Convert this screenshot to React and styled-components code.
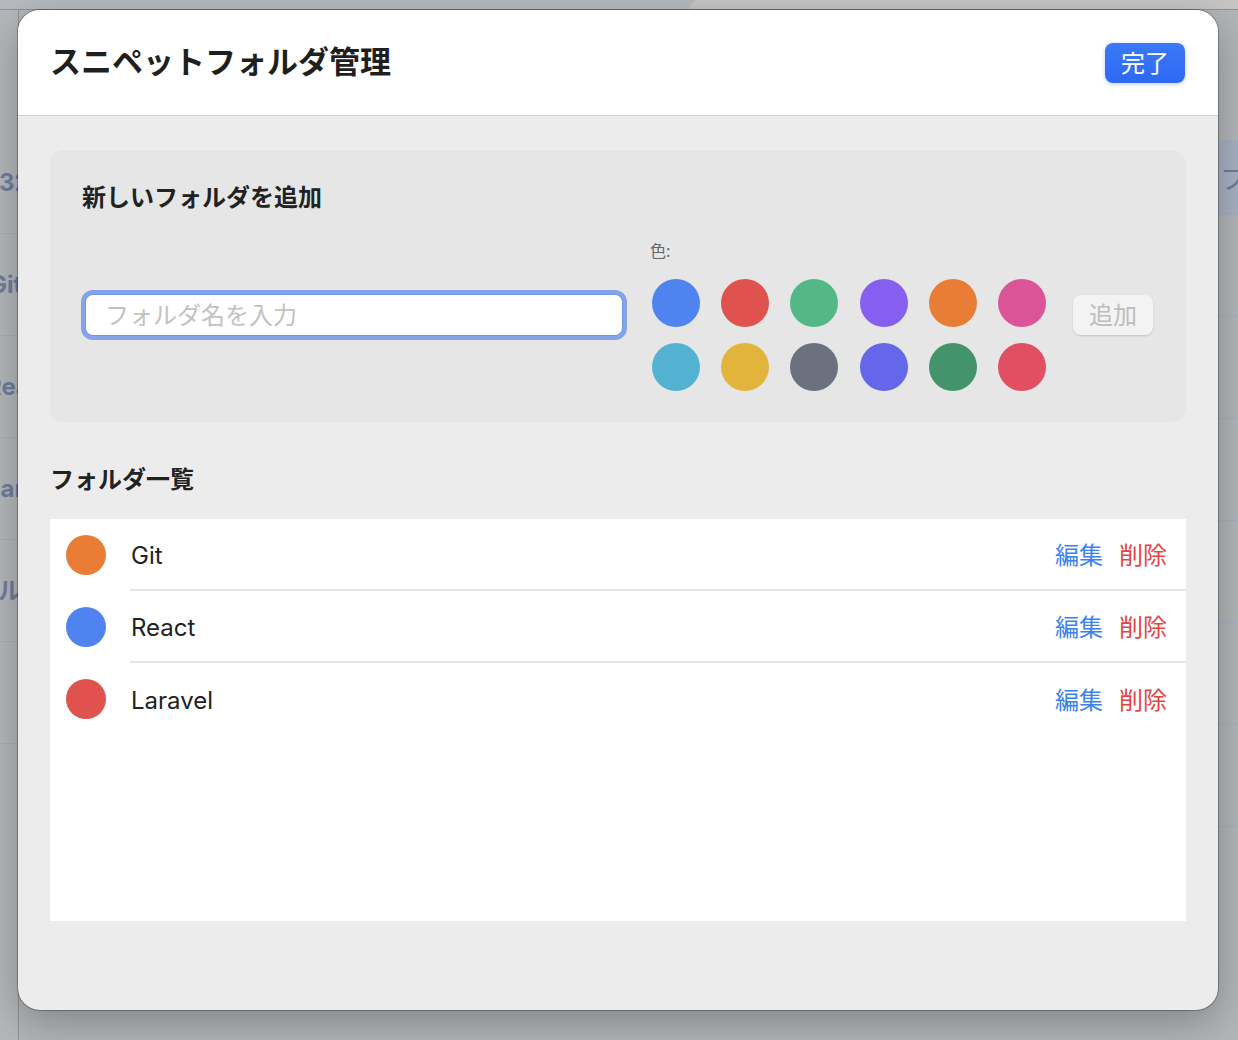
import React from "react";
import styled, { createGlobalStyle } from "styled-components";

const GlobalStyle = createGlobalStyle`
    html, body {
        margin: 0;
        padding: 0;
        width: 1238px;
        height: 1040px;
        overflow: hidden;
        font-family: "Noto Sans CJK JP", "Noto Sans", sans-serif;
    }
`;

const swatches = [
    "#4f83ef", "#df524e", "#54b886", "#875ff0", "#e97d36", "#dc5498",
    "#53b2d2", "#e2b43c", "#6c717f", "#6467e9", "#43946a", "#e14f62",
];

const folders = [
    { name: "Git", color: "#e97d36" },
    { name: "React", color: "#4f83ef" },
    { name: "Laravel", color: "#df524e" },
];

// what peeks out of the dimmed app behind the sheet
const sideItems = [
    { text: "32", shift: -1 },
    { text: "Git", shift: -11 },
    { text: "React", shift: -14 },
    { text: "Laravel", shift: -13 },
    { text: "ル", shift: -2 },
    { text: "", shift: 0 },
];
const mainItems = ["フォルダ", "", "", "", "", "", ""];

const App = () => {
    return (
        <>
            <GlobalStyle />
            <Backdrop>
                <TopStrip>
                    <TopLeft />
                    <TopTab />
                </TopStrip>
                <BackBody>
                    <SidePane>
                        {sideItems.map((s, i) => (
                            <SideRow key={i} $shift={s.shift}>{s.text}</SideRow>
                        ))}
                    </SidePane>
                    <MainPane />
                    <RightPane>
                        {mainItems.map((t, i) => (
                            <RightRow key={i} $active={i === 0}>{t}</RightRow>
                        ))}
                    </RightPane>
                </BackBody>
            </Backdrop>

            <Sheet>
                <Header>
                    <Title>スニペットフォルダ管理</Title>
                    <DoneButton>完了</DoneButton>
                </Header>

                <Body>
                    <AddCard>
                        <CardTitle>新しいフォルダを追加</CardTitle>
                        <AddRow>
                            <NameInput placeholder="フォルダ名を入力" />
                            <ColorColumn>
                                <ColorLabel>色:</ColorLabel>
                                <ColorGrid>
                                    {swatches.map((c) => (
                                        <Swatch key={c} $color={c} />
                                    ))}
                                </ColorGrid>
                            </ColorColumn>
                            <AddButton>追加</AddButton>
                        </AddRow>
                    </AddCard>

                    <SectionTitle>フォルダ一覧</SectionTitle>

                    <FolderList>
                        {folders.map((f) => (
                            <FolderRow key={f.name}>
                                <Dot $color={f.color} />
                                <RowMain>
                                    <FolderName>{f.name}</FolderName>
                                    <Action $tone="blue">編集</Action>
                                    <Action $tone="red">削除</Action>
                                </RowMain>
                            </FolderRow>
                        ))}
                    </FolderList>
                </Body>
            </Sheet>
        </>
    );
};

// background app (dimmed)
const Backdrop = styled.div`
    width: 1238px;
    height: 1040px;
    background: #b3b6b9;
    display: flex;
    flex-direction: column;
`;

const TopStrip = styled.div`
    height: 9px;
    display: flex;
    border-bottom: 1px solid #8f9295;
`;

const TopLeft = styled.div`
    width: 690px;
    background: #b7bbbf;
`;

const TopTab = styled.div`
    flex: 1;
    background: #c6c6c6;
    border-top-left-radius: 8px;
`;

const BackBody = styled.div`
    flex: 1;
    display: flex;
`;

const SidePane = styled.div`
    width: 18px;
    padding-top: 122px;
    background: #b5b8bb;
    border-right: 1px solid #909396;
    overflow: hidden;
`;

const SideRow = styled.div`
    height: 102px;
    line-height: 102px;
    box-sizing: border-box;
    white-space: nowrap;
    overflow: hidden;
    text-indent: ${(p) => p.$shift}px;
    font-family: "Inter", "Noto Sans CJK JP", sans-serif;
    font-weight: 700;
    font-size: 24px;
    color: #6f7ea0;
    border-bottom: 1px solid #a7b0bf;
`;

const MainPane = styled.div`
    flex: 1;
`;

const RightPane = styled.div`
    width: 20px;
    padding-top: 130px;
    overflow: hidden;
`;

const RightRow = styled.div`
    height: ${(p) => (p.$active ? "75px" : "102px")};
    box-sizing: border-box;
    padding-left: 2px;
    display: flex;
    align-items: center;
    white-space: nowrap;
    font-size: 26px;
    color: #6f7ea0;
    background: ${(p) => (p.$active ? "#a9b2c2" : "transparent")};
    border-bottom: 1px solid #a7b0bf;
`;

// sheet
const Sheet = styled.div`
    position: absolute;
    left: 18px;
    top: 10px;
    width: 1200px;
    height: 1000px;
    box-sizing: border-box;
    border-radius: 22px;
    overflow: hidden;
    background: #ececec;
    display: flex;
    flex-direction: column;
    box-shadow: 0 0 0 1px rgba(0, 0, 0, 0.28), 0 12px 40px rgba(0, 0, 0, 0.28);
`;

const Header = styled.div`
    height: 105px;
    flex-shrink: 0;
    background: #ffffff;
    border-bottom: 1px solid #d2d2d2;
    display: flex;
    align-items: center;
    justify-content: space-between;
    padding: 0 33px 0 32px;
`;

const Title = styled.h1`
    margin: 0;
    padding-bottom: 6px;
    font-size: 31px;
    font-weight: 600;
    color: #1f1f1f;
    letter-spacing: 0;
`;

const DoneButton = styled.button`
    height: 40px;
    padding: 0 16px 3px;
    margin-top: 1px;
    border: none;
    border-radius: 8px;
    background: linear-gradient(#3a79f7, #2f68f3);
    color: #ffffff;
    font-family: inherit;
    font-size: 24px;
    line-height: 36px;
    box-shadow: 0 1px 4px rgba(47, 104, 243, 0.35);
`;

const Body = styled.div`
    flex: 1;
    display: flex;
    flex-direction: column;
    padding: 34px 32px 89px;
    min-height: 0;
`;

const AddCard = styled.div`
    background: #e6e6e6;
    border-radius: 14px;
    padding: 29px 33px 31px 32px;
`;

const CardTitle = styled.h2`
    margin: 0;
    font-size: 24px;
    line-height: 34px;
    font-weight: 700;
    color: #222;
`;

const AddRow = styled.div`
    margin-top: 26px;
    display: flex;
    align-items: center;
`;

const NameInput = styled.input`
    flex: 1;
    min-width: 0;
    height: 42px;
    box-sizing: border-box;
    margin: 0 27px 0 3px;
    padding: 0 19px 4px;
    border: 1px solid #6f95e3;
    border-radius: 8px;
    background: #ffffff;
    font-family: inherit;
    font-size: 24px;
    color: #222;
    outline: none;
    box-shadow: 0 0 0 4px rgba(120, 156, 234, 0.9);

    &::placeholder {
        color: #c2c2c2;
    }
`;

const ColorColumn = styled.div`
    display: flex;
    flex-direction: column;
    gap: 18px;
    margin-right: 27px;
`;

const ColorLabel = styled.span`
    font-size: 16px;
    line-height: 22px;
    color: #666;
`;

const ColorGrid = styled.div`
    display: grid;
    grid-template-columns: repeat(6, 48px);
    column-gap: 21.2px;
    row-gap: 16px;
    padding-left: 2px;
`;

const Swatch = styled.div`
    width: 48px;
    height: 48px;
    border-radius: 50%;
    background: ${(p) => p.$color};
`;

const AddButton = styled.button`
    width: 80px;
    height: 40px;
    padding: 0 0 4px;
    border: none;
    border-radius: 8px;
    background: #f3f3f3;
    color: #bdbdbd;
    font-family: inherit;
    font-size: 24px;
    box-shadow: 0 1px 2px rgba(0, 0, 0, 0.15);
`;

const SectionTitle = styled.h2`
    margin: 39px 0 24px;
    font-size: 24px;
    line-height: 34px;
    font-weight: 700;
    color: #222;
`;

const FolderList = styled.div`
    flex: 1;
    background: #ffffff;
`;

const FolderRow = styled.div`
    display: flex;
    align-items: stretch;
    padding-left: 16px;

    &:not(:last-child) > div:last-child {
        border-bottom: 2px solid #e4e4e4;
    }
`;

const Dot = styled.div`
    width: 40px;
    height: 40px;
    margin: 16px 24px 16px 0;
    border-radius: 50%;
    background: ${(p) => p.$color};
    flex-shrink: 0;
`;

const RowMain = styled.div`
    flex: 1;
    height: 72px;
    box-sizing: border-box;
    display: flex;
    align-items: center;
    gap: 16px;
    padding-right: 19px;
`;

const FolderName = styled.span`
    flex: 1;
    font-family: "Inter", "Noto Sans CJK JP", sans-serif;
    font-size: 24px;
    color: #222;
    padding: 3px 0 0 1px;
`;

const Action = styled.span`
    font-size: 24px;
    padding-bottom: 2px;
    color: ${(p) => (p.$tone === "red" ? "#e8423e" : "#3a82f0")};
`;

export default App;
